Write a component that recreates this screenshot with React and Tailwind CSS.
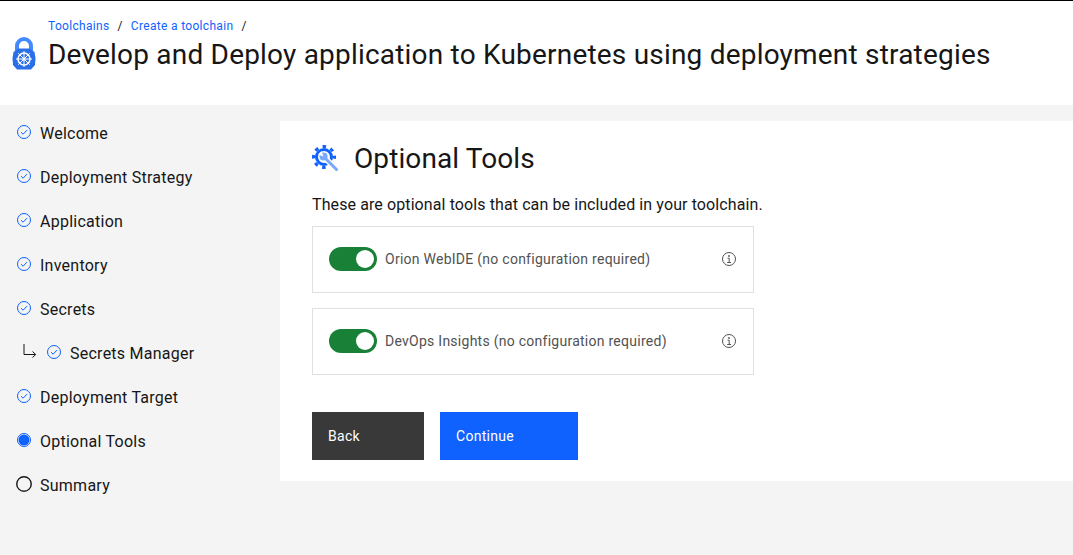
import { useState } from "react"

const font = "font-['Roboto','Liberation_Sans',sans-serif]"

const steps = [
  { label: "Welcome", state: "done" },
  { label: "Deployment Strategy", state: "done" },
  { label: "Application", state: "done" },
  { label: "Inventory", state: "done" },
  { label: "Secrets", state: "done" },
  { label: "Secrets Manager", state: "done", sub: true },
  { label: "Deployment Target", state: "done" },
  { label: "Optional Tools", state: "current" },
  { label: "Summary", state: "todo" },
]

const tools = ["Orion WebIDE", "DevOps Insights"]

const StepIcon = ({ state }) => {
  if (state === "done") {
    return (
      <svg width="16" height="16" viewBox="0 0 16 16" fill="none" className="shrink-0">
        <circle cx="8" cy="8" r="6.5" stroke="#0f62fe" />
        <path d="M5 8.2 7.1 10.2 11 6.1" stroke="#0f62fe" />
      </svg>
    )
  }
  if (state === "current") {
    return (
      <svg width="16" height="16" viewBox="0 0 16 16" fill="none" className="shrink-0">
        <circle cx="8" cy="8" r="6.5" stroke="#0f62fe" />
        <circle cx="8" cy="8" r="5.5" fill="#0f62fe" />
      </svg>
    )
  }
  return (
    <svg width="16" height="16" viewBox="0 0 16 16" fill="none" className="shrink-0">
      <circle cx="8" cy="8" r="7.25" stroke="#161616" strokeWidth="1.4" />
    </svg>
  )
}

const SubArrow = () => (
  <svg width="16" height="16" viewBox="0 0 16 16" fill="none" className="mb-[5px] shrink-0">
    <path d="M2 1V11.500H13.500M10.500 8.500 13.700 11.500 10.500 14.500" stroke="#161616" />
  </svg>
)

const LockLogo = () => (
  <svg width="24" height="33" viewBox="0 0 24 33" fill="none" className="mb-[3px] shrink-0">
    <path d="M5 15V9a7 7 0 0 1 14 0v6" stroke="#4589ff" strokeWidth="4" />
    <path d="M6.500 11.500h11l5 3.500 1 6-.5 7-4 4.500H5l-4-4.500-.5-7 1-6Z" fill="#2a6fe8" />
    <circle cx="12" cy="22" r="6" stroke="#fff" strokeWidth="1.500" />
    <circle cx="12" cy="22" r="1.500" fill="#fff" />
    <path d="M12 14v16M4 22h16M6.300 16.300l11.400 11.400M17.700 16.300 6.300 27.700" stroke="#fff" strokeWidth="1" />
  </svg>
)

const ToolsIcon = () => (
  <svg width="28" height="28" viewBox="0 0 28 28" fill="none" className="shrink-0">
    <circle cx="12" cy="12" r="7.500" stroke="#0f62fe" strokeWidth="3" />
    <circle cx="12" cy="12" r="10.500" stroke="#0f62fe" strokeWidth="3" strokeDasharray="3.600 4.650" strokeDashoffset="1.800" />
    <path d="M15 15 27 27" stroke="#fff" strokeWidth="6" />
    <path d="M13 13 24.500 24.500" stroke="#78a9ff" strokeWidth="3" strokeLinecap="round" />
    <circle cx="11.500" cy="11.500" r="4" fill="#78a9ff" />
    <path d="M11.500 11.500 6 9.500 9.500 6Z" fill="#fff" />
  </svg>
)

const InfoIcon = () => (
  <svg width="16" height="16" viewBox="0 0 16 16" fill="none" className="shrink-0">
    <circle cx="8" cy="8" r="6.500" stroke="#525252" />
    <path d="M6.500 7.200H8.200V11.500M6.200 11.500H10" stroke="#525252" />
    <circle cx="8" cy="5" r="0.900" fill="#525252" />
  </svg>
)

const Toggle = ({ on, onClick }) => (
  <button
    type="button"
    onClick={onClick}
    className={`relative h-6 w-12 shrink-0 rounded-full ${on ? "bg-[#198038]" : "bg-[#8d8d8d]"}`}
  >
    <span className={`absolute top-[3px] h-[18px] w-[18px] rounded-full bg-white ${on ? "left-[27px]" : "left-[3px]"}`} />
  </button>
)

const ToolRow = ({ name }) => {
  const [on, setOn] = useState(true)
  return (
    <div className="flex h-[67px] items-center border border-[#e0e0e0] bg-white pb-[2px] pl-4 pr-4">
      <Toggle on={on} onClick={() => setOn(!on)} />
      <span className="ml-2 flex-1 text-sm tracking-[0.26px] text-[#525252]">{name} (no configuration required)</span>
      <InfoIcon />
    </div>
  )
}

export default function App() {
  return (
    <div className={`${font} flex min-h-[555px] flex-col bg-[#f4f4f4] text-[#161616]`}>
      <header className="h-[105px] border-t border-black bg-white pl-3 pt-[17px]">
        <nav className="ml-9 flex h-4 items-center text-xs leading-4 tracking-[0.32px] text-[#0f62fe]">
          <a href="#">Toolchains</a>
          <span className="ml-2 mr-[8px] text-[#161616]">/</span>
          <a href="#">Create a toolchain</a>
          <span className="mx-2 text-[#161616]">/</span>
        </nav>
        <div className="mt-[3px] flex items-center">
          <LockLogo />
          <h1 className="ml-3 text-[28px] leading-9 font-normal tracking-[0.2px]">
            Develop and Deploy application to Kubernetes using deployment strategies
          </h1>
        </div>
      </header>

      <div className="flex flex-1">
        <aside className="w-[280px] shrink-0 pt-[6px]">
          {steps.map((step) => (
            <div key={step.label} className={`flex h-11 items-center ${step.sub ? "pl-[22px]" : "pl-4"}`}>
              {step.sub && <SubArrow />}
              <span className={step.sub ? "mb-[3px] ml-2" : "mb-[3px]"}>
                <StepIcon state={step.state} />
              </span>
              <span className="ml-2 mt-[2px] text-base leading-5 tracking-[0.25px]">{step.label}</span>
            </div>
          ))}
        </aside>

        <main className="mt-4 mb-[74px] flex-1 bg-white pl-8 pt-5">
          <div className="flex h-9 items-center">
            <ToolsIcon />
            <h2 className="ml-[14px] text-[28px] leading-9 font-normal tracking-[0.1px]">Optional Tools</h2>
          </div>
          <p className="mt-4 text-base leading-6 tracking-[0.1px]">These are optional tools that can be included in your toolchain.</p>
          <div className="mt-[9px] flex w-[442px] flex-col gap-[15px]">
            {tools.map((name) => (
              <ToolRow key={name} name={name} />
            ))}
          </div>
          <div className="mt-[37px] flex gap-4">
            <button type="button" className="h-12 w-28 bg-[#393939] pl-4 text-left text-sm tracking-[0.3px] text-white">
              Back
            </button>
            <button type="button" className="h-12 w-[138px] bg-[#0f62fe] pl-4 text-left text-sm tracking-[0.3px] text-white">
              Continue
            </button>
          </div>
        </main>
      </div>
    </div>
  )
}
